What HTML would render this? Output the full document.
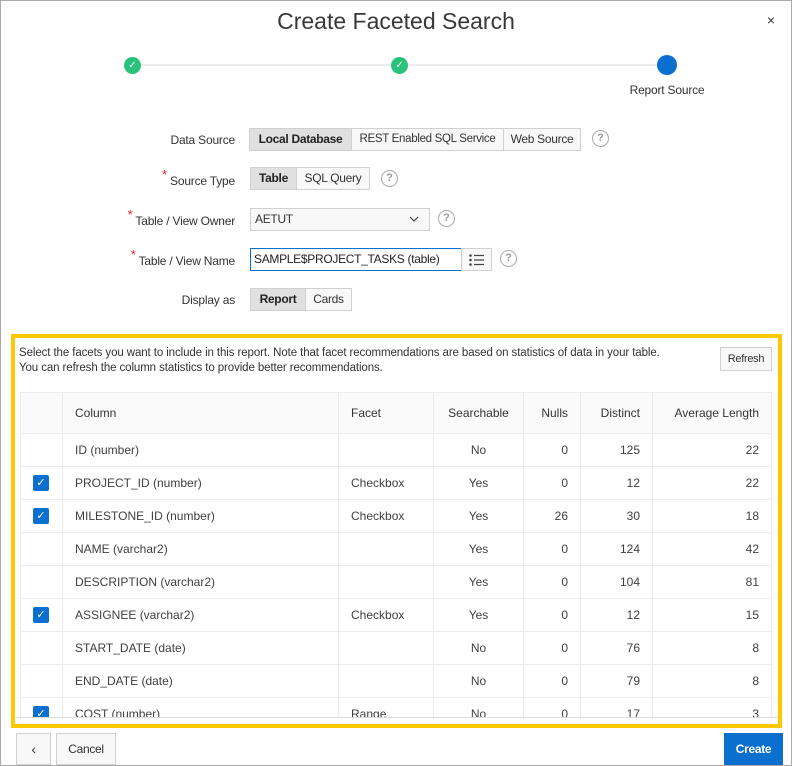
<!DOCTYPE html>
<html><head><meta charset="utf-8"><style>
*{box-sizing:border-box;margin:0;padding:0}
body{width:792px;height:766px;overflow:hidden;background:#fff;font-family:"Liberation Sans",sans-serif;color:#404040;font-size:12px;position:relative}
.a{position:absolute}
.frame{left:0;top:0;width:792px;height:766px;border:1px solid #aaa}
.title{left:0;width:792px;top:8px;text-align:center;font-size:23px;color:#383838}
.lbl{right:557px;text-align:right;font-size:12px;color:#333;letter-spacing:-0.2px}
.star{color:#e0202a;font-size:13px}
.btn{position:absolute;height:23px;border:1px solid #d0d0d0;background:#f8f8f8;font-size:12px;color:#333;line-height:21px;text-align:center;letter-spacing:-0.3px;white-space:nowrap}
.on{background:#e0e0e0;font-weight:bold;color:#222}
.help{width:17px;height:17px;border:1.5px solid #aaa;border-radius:50%;color:#999;font-size:11px;text-align:center;line-height:14px;font-weight:bold}
table{border-collapse:collapse;font-size:12px;color:#404040}
td,th{border:1px solid #ebebeb;height:33px;padding:0 12px;font-weight:normal}
th{height:41px;background:#fafafa;color:#333;text-align:left}
.r{text-align:right}.c{text-align:center}
.cb{display:inline-block;width:16px;height:16px;background:#0b6fcf;border-radius:2px;color:#fff;font-size:11px;line-height:16px;text-align:center;vertical-align:middle}
</style></head><body>
<div class="a frame"></div>
<div class="a title">Create Faceted Search</div>
<div class="a" style="right:17px;top:12px;font-size:14px;color:#333">×</div>
<div class="a" style="left:133px;top:64px;width:534px;height:2px;background:#ececec"></div>
<div class="a" style="left:124px;top:57px;width:17px;height:17px;border-radius:50%;background:#2ac27a;color:#fff;font-size:10px;text-align:center;line-height:17px">✓</div>
<div class="a" style="left:391px;top:57px;width:17px;height:17px;border-radius:50%;background:#2ac27a;color:#fff;font-size:10px;text-align:center;line-height:17px">✓</div>
<div class="a" style="left:657px;top:55px;width:20px;height:20px;border-radius:50%;background:#0b6fcf"></div>
<div class="a" style="left:610px;top:83px;width:114px;text-align:center;font-size:12px;color:#333;letter-spacing:-0.2px">Report Source</div>

<div class="a lbl" style="top:133px">Data Source</div>
<div class="btn on" style="left:249px;top:128px;width:103px">Local Database</div>
<div class="btn" style="left:351px;top:128px;width:153px;font-size:11.5px">REST Enabled SQL Service</div>
<div class="btn" style="left:503px;top:128px;width:78px">Web Source</div>
<div class="a help" style="left:592px;top:130px">?</div>

<div class="a lbl" style="top:173px"><span class="star" style="position:relative;top:-6px">*</span> Source Type</div>
<div class="btn on" style="left:250px;top:167px;width:47px">Table</div>
<div class="btn" style="left:296px;top:167px;width:74px">SQL Query</div>
<div class="a help" style="left:381px;top:170px">?</div>

<div class="a lbl" style="top:213px"><span class="star" style="position:relative;top:-6px">*</span> Table / View Owner</div>
<div class="btn" style="left:250px;top:208px;width:180px;text-align:left;padding-left:4px">AETUT<svg style="position:absolute;right:10px;top:7px" width="10" height="6" viewBox="0 0 10 6"><path d="M1 1l4 4 4-4" fill="none" stroke="#444" stroke-width="1.2"/></svg></div>
<div class="a help" style="left:438px;top:210px">?</div>

<div class="a lbl" style="top:253px"><span class="star" style="position:relative;top:-6px">*</span> Table / View Name</div>
<div class="btn" style="left:250px;top:248px;width:212px;background:#fff;border-color:#0b6fcf;text-align:left;padding-left:3px;color:#222">SAMPLE$PROJECT_TASKS (table)</div>
<div class="btn" style="left:461px;top:248px;width:31px"><svg style="position:absolute;left:7px;top:5px" width="16" height="12" viewBox="0 0 16 12"><circle cx="1.5" cy="1.5" r="1.3" fill="#444"/><circle cx="1.5" cy="6" r="1.3" fill="#444"/><circle cx="1.5" cy="10.5" r="1.3" fill="#444"/><path d="M5 1.5h10M5 6h10M5 10.5h10" stroke="#444" stroke-width="1.2"/></svg></div>
<div class="a help" style="left:500px;top:250px">?</div>

<div class="a lbl" style="top:293px">Display as</div>
<div class="btn on" style="left:250px;top:288px;width:56px">Report</div>
<div class="btn" style="left:305px;top:288px;width:47px">Cards</div>

<div class="a" style="left:15px;top:338px;width:763px;height:380px;overflow:hidden">
<div class="a" style="left:4px;top:8px;font-size:11.5px;line-height:15px;color:#333;letter-spacing:-0.1px">Select the facets you want to include in this report. Note that facet recommendations are based on statistics of data in your table.<br>You can refresh the column statistics to provide better recommendations.</div>
<div class="btn" style="left:705px;top:9px;width:52px;height:24px;font-size:11px;line-height:22px">Refresh</div>
<table class="a" style="left:5px;top:54px;width:752px">
<tr><th style="width:42px"></th><th style="width:276px">Column</th><th style="width:95px">Facet</th><th class="c" style="width:90px">Searchable</th><th class="r" style="width:57px">Nulls</th><th class="r" style="width:72px">Distinct</th><th class="r">Average Length</th></tr>
<tr><td></td><td>ID (number)</td><td></td><td class="c">No</td><td class="r">0</td><td class="r">125</td><td class="r">22</td></tr>
<tr><td><span class="cb">✓</span></td><td>PROJECT_ID (number)</td><td>Checkbox</td><td class="c">Yes</td><td class="r">0</td><td class="r">12</td><td class="r">22</td></tr>
<tr><td><span class="cb">✓</span></td><td>MILESTONE_ID (number)</td><td>Checkbox</td><td class="c">Yes</td><td class="r">26</td><td class="r">30</td><td class="r">18</td></tr>
<tr><td></td><td>NAME (varchar2)</td><td></td><td class="c">Yes</td><td class="r">0</td><td class="r">124</td><td class="r">42</td></tr>
<tr><td></td><td>DESCRIPTION (varchar2)</td><td></td><td class="c">Yes</td><td class="r">0</td><td class="r">104</td><td class="r">81</td></tr>
<tr><td><span class="cb">✓</span></td><td>ASSIGNEE (varchar2)</td><td>Checkbox</td><td class="c">Yes</td><td class="r">0</td><td class="r">12</td><td class="r">15</td></tr>
<tr><td></td><td>START_DATE (date)</td><td></td><td class="c">No</td><td class="r">0</td><td class="r">76</td><td class="r">8</td></tr>
<tr><td></td><td>END_DATE (date)</td><td></td><td class="c">No</td><td class="r">0</td><td class="r">79</td><td class="r">8</td></tr>
<tr><td><span class="cb">✓</span></td><td>COST (number)</td><td>Range</td><td class="c">No</td><td class="r">0</td><td class="r">17</td><td class="r">3</td></tr>
</table>
<div class="a" style="left:0;top:379px;width:763px;height:1px;background:#ddd"></div>
</div>
<div class="a" style="left:11px;top:334px;width:771px;height:394px;border:4px solid #fcc800"></div>

<div class="btn" style="left:16px;top:733px;width:35px;height:32px;line-height:30px;font-size:14px">&#8249;</div>
<div class="btn" style="left:56px;top:733px;width:60px;height:32px;line-height:30px">Cancel</div>
<div class="btn" style="left:724px;top:733px;width:59px;height:32px;line-height:30px;background:#0b6fcf;border-color:#0b6fcf;color:#fff;font-weight:bold">Create</div>
</body></html>
